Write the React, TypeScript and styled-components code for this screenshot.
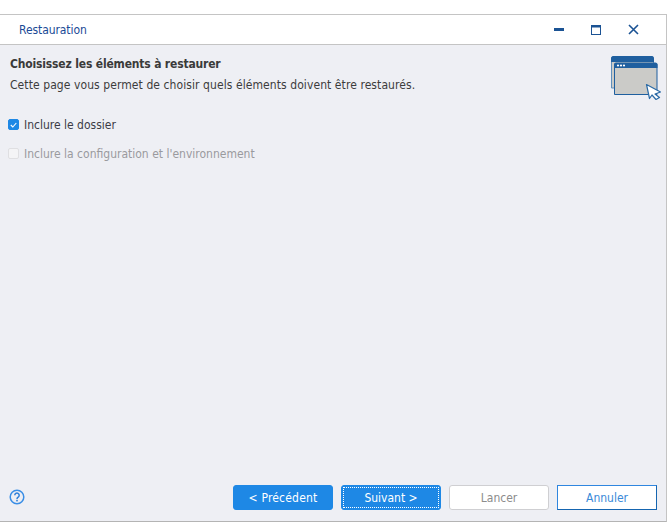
import React from 'react';
import styled, { createGlobalStyle } from 'styled-components';

const GlobalStyle = createGlobalStyle`
  html, body {
    margin: 0;
    padding: 0;
    background: #ffffff;
  }
  body {
    font-family: "DejaVu Sans Condensed", "DejaVu Sans", sans-serif;
    font-size: 12px;
  }
`;

const Page = styled.div`
  width: 670px;
  height: 525px;
  padding-top: 14px;
  box-sizing: border-box;
`;

const Window = styled.div`
  width: 667px;
  height: 508px;
  box-sizing: border-box;
  border-top: 1px solid #c4c4c4;
  border-right: 1px solid #c4c4c4;
  border-bottom: 1px solid #b4b4b4;
  display: flex;
  flex-direction: column;
  background: #eeeff4;
`;

const TitleBar = styled.div`
  height: 29px;
  flex: none;
  background: #ffffff;
  border-bottom: 1px solid #c4c4c4;
  display: flex;
  align-items: center;
  padding-left: 19px;
  color: #1a4a96;
`;

const Title = styled.span`
  flex: 1;
  letter-spacing: -0.08px;
`;

const WinButton = styled.button`
  width: 37px;
  height: 29px;
  padding: 0;
  border: 0;
  background: none;
  display: flex;
  align-items: center;
  justify-content: center;

  &:last-child {
    margin-right: 14px;
  }
`;

const Header = styled.div`
  display: flex;
  justify-content: space-between;
  padding: 11px 5px 0 10px;
  height: 50px;
  flex: none;
  box-sizing: border-box;
`;

const Heading = styled.h1`
  margin: 0;
  font-size: 12px;
  line-height: 17px;
  font-weight: 700;
  letter-spacing: -0.17px;
  color: #3a3a3a;
`;

const Description = styled.p`
  margin: 4px 0 0;
  line-height: 17px;
  letter-spacing: 0.08px;
  color: #3c3c3c;
`;

const Options = styled.div`
  flex: 1;
  display: flex;
  flex-direction: column;
  gap: 12px;
  padding: 21px 0 0 8px;
`;

const Option = styled.label<{ $disabled?: boolean }>`
  display: flex;
  align-items: center;
  gap: 5px;
  height: 17px;
  color: ${(p) => (p.$disabled ? '#9a9a9e' : '#3c3c46')};
`;

const Box = styled.span<{ $checked?: boolean }>`
  width: 11px;
  height: 11px;
  border-radius: 2px;
  box-sizing: border-box;
  display: flex;
  align-items: center;
  justify-content: center;
  background: ${(p) => (p.$checked ? '#1e88e5' : '#f4f4f6')};
  border: 1px solid ${(p) => (p.$checked ? '#1e88e5' : '#dfdfe2')};
`;

const Footer = styled.div`
  height: 36px;
  flex: none;
  display: flex;
  align-items: flex-start;
  padding: 0 9px;
`;

const Help = styled.div`
  flex: 1;
  padding-top: 4px;
  display: flex;
`;

const Buttons = styled.div`
  display: flex;
  gap: 8px;
`;

const Button = styled.button<{ $kind: 'primary' | 'disabled' | 'outline'; $focus?: boolean }>`
  position: relative;
  width: 100px;
  height: 25px;
  padding: 0;
  box-sizing: border-box;
  font: inherit;
  border-radius: ${(p) => (p.$kind === 'outline' ? '0' : '3px')};
  background: ${(p) => (p.$kind === 'primary' ? '#1e88e5' : '#ffffff')};
  color: ${(p) =>
    p.$kind === 'primary' ? '#ffffff' : p.$kind === 'disabled' ? '#8c8c8c' : '#3a8ad8'};
  border: 1px solid;
  border-color: ${(p) =>
    p.$kind === 'primary'
      ? '#1e88e5'
      : p.$kind === 'disabled'
        ? '#cfcfd2'
        : '#2f86df #1565b0 #1565b0 #2f86df'};

  &::after {
    content: '';
    display: ${(p) => (p.$focus ? 'block' : 'none')};
    position: absolute;
    inset: 1px;
    border: 1px dotted #ffffff;
  }
`;

const BackLabel = styled.span`
  letter-spacing: 0.2px;
`;

const BannerIcon = styled.svg`
  flex: none;
`;

export default function App(): JSX.Element {
  return (
    <Page>
      <GlobalStyle />
      <Window>
        <TitleBar>
          <Title>Restauration</Title>
          <WinButton aria-label="Réduire">
            <svg width="11" height="3" viewBox="0 0 11 3">
              <rect width="10" height="3" fill="#1b5394" />
            </svg>
          </WinButton>
          <WinButton aria-label="Agrandir">
            <svg width="11" height="10" viewBox="0 0 11 10">
              <rect x="0.5" y="0.5" width="9" height="9" fill="none" stroke="#1b5394" />
              <rect width="10" height="2.5" fill="#1b5394" />
            </svg>
          </WinButton>
          <WinButton aria-label="Fermer">
            <svg width="11" height="11" viewBox="0 0 11 11">
              <path d="M1 1l9 9M10 1l-9 9" stroke="#1b5394" strokeWidth="1.6" fill="none" />
            </svg>
          </WinButton>
        </TitleBar>
        <Header>
          <div>
            <Heading>Choisissez les éléments à restaurer</Heading>
            <Description>Cette page vous permet de choisir quels éléments doivent être restaurés.</Description>
          </div>
          <BannerIcon width="50" height="44" viewBox="0 0 50 44">
            <path d="M0.5 32V2.5a2 2 0 0 1 2-2h38a2 2 0 0 1 2 2V32z" fill="#cbcbc8" stroke="#5f8fbc" />
            <path d="M0 6V2.5A2.5 2.5 0 0 1 2.5 0h38.5A2.5 2.5 0 0 1 43 2.5V6z" fill="#1f5f9f" />
            <path d="M3.5 38.5V8.5a1.5 1.5 0 0 1 1.5-1.5h39.5a1.5 1.5 0 0 1 1.5 1.5v30z" fill="#cbcbc8" stroke="#1f5f9f" />
            <path d="M3 12V8.5A1.5 1.5 0 0 1 4.5 7H45a1.5 1.5 0 0 1 1.5 1.5V12z" fill="#1f5f9f" />
            <circle cx="7" cy="9.5" r="1.1" fill="#ffffff" />
            <circle cx="10" cy="9.5" r="1.1" fill="#ffffff" />
            <circle cx="13" cy="9.5" r="1.1" fill="#ffffff" />
            <path
              d="M35.5 28.5L49.5 36L44 38L48.5 41.5L45 43.5L41 39L38.5 42.5Z"
              fill="#ffffff"
              stroke="#2a6aa6"
              strokeWidth="1.2"
              strokeLinejoin="round"
            />
          </BannerIcon>
        </Header>
        <Options>
          <Option>
            <Box $checked>
              <svg width="7" height="6" viewBox="0 0 7 6">
                <path d="M0.8 3l2 2 3.5-4" stroke="#ffffff" strokeWidth="1.1" fill="none" />
              </svg>
            </Box>
            Inclure le dossier
          </Option>
          <Option $disabled>
            <Box />
            Inclure la configuration et l'environnement
          </Option>
        </Options>
        <Footer>
          <Help>
            <svg width="16" height="16" viewBox="0 0 16 16">
              <circle cx="8" cy="8" r="6.8" fill="none" stroke="#3a8ee6" strokeWidth="1.5" />
              <path
                d="M5.8 6.3a2.2 2.2 0 1 1 3.4 1.8c-.8.5-1.2.9-1.2 1.8"
                fill="none"
                stroke="#2f7fd8"
                strokeWidth="1.5"
              />
              <rect x="7.2" y="10.8" width="1.6" height="1.6" fill="#2f7fd8" />
            </svg>
          </Help>
          <Buttons>
            <Button $kind="primary"><BackLabel>&lt; Précédent</BackLabel></Button>
            <Button $kind="primary" $focus>Suivant &gt;</Button>
            <Button $kind="disabled" disabled>Lancer</Button>
            <Button $kind="outline">Annuler</Button>
          </Buttons>
        </Footer>
      </Window>
    </Page>
  );
}
